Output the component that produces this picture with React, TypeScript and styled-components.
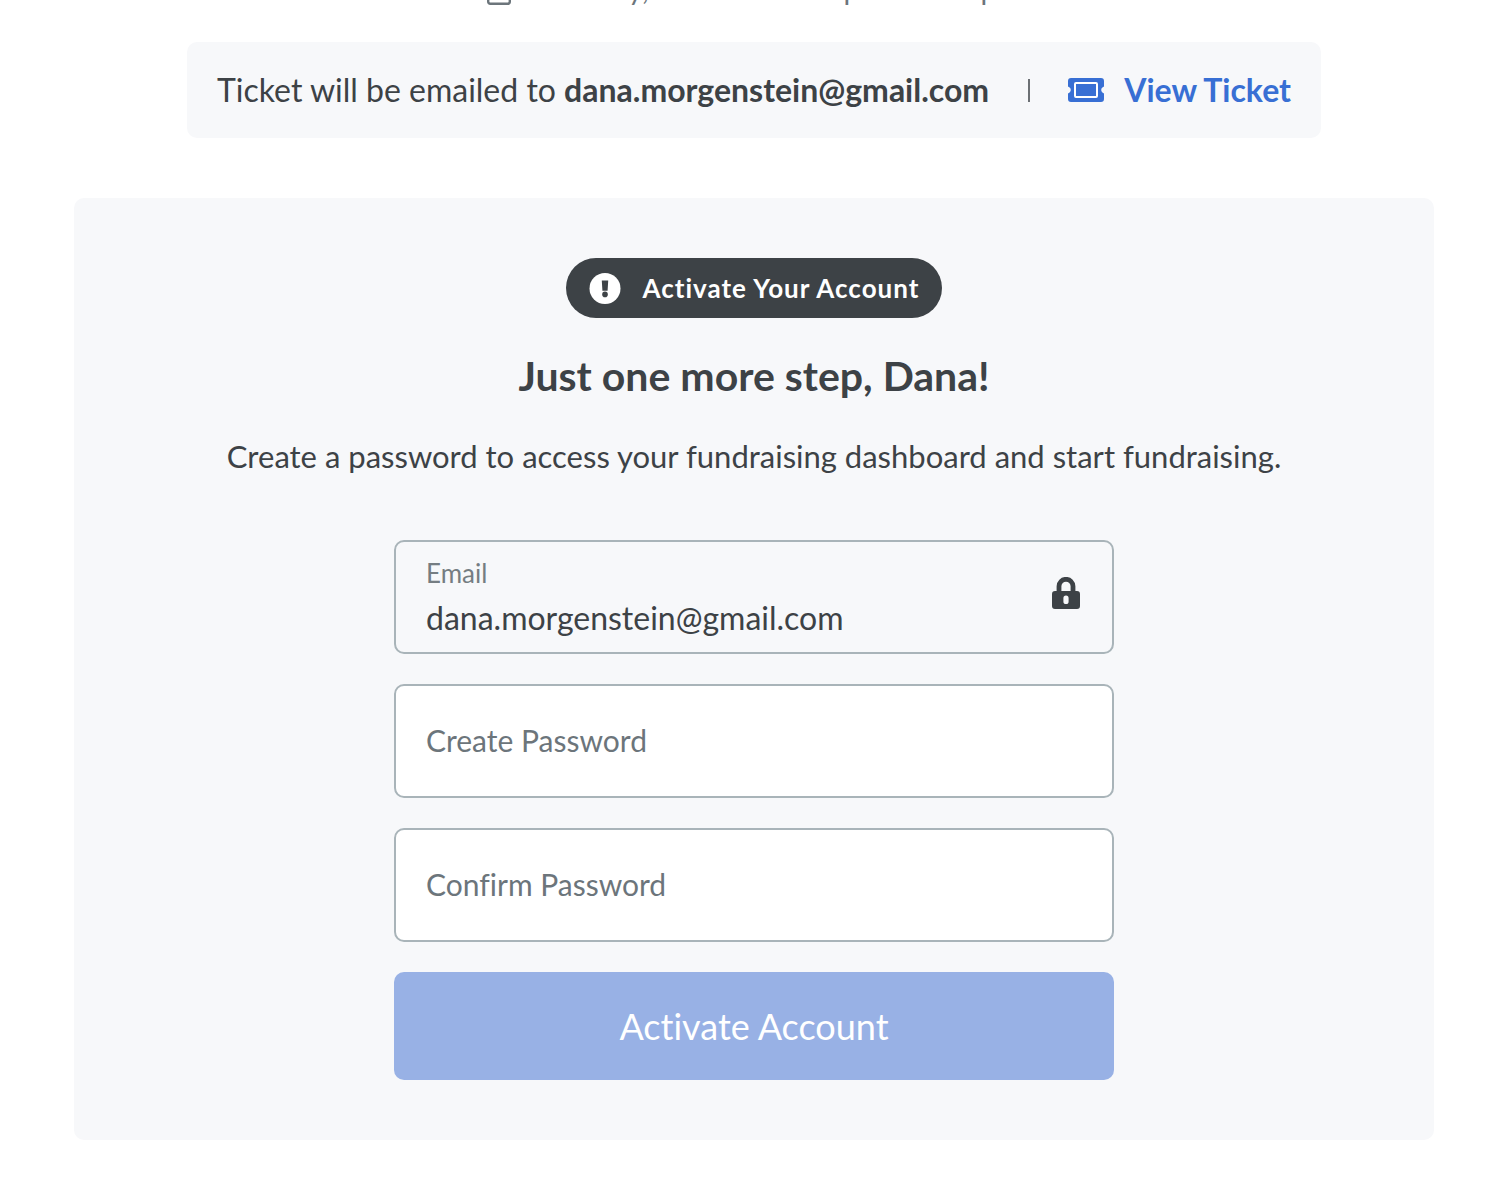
import React from "react";
import styled, { createGlobalStyle } from "styled-components";

const GlobalStyle = createGlobalStyle`
  *, *::before, *::after { box-sizing: border-box; }
  body {
    margin: 0;
    background: #ffffff;
    color: #3d4246;
    font-family: Lato, "Liberation Sans", sans-serif;
    font-variant-ligatures: none;
  }
  input, button { font-family: inherit; font-variant-ligatures: inherit; }
`;

const Page = styled.main`
  display: flex;
  flex-direction: column;
  align-items: center;
  padding: 0 74px 50px;
  overflow: hidden;
`;

const EventDate = styled.div`
  display: flex;
  align-items: center;
  gap: 20px;
  margin-top: -31px;
  margin-bottom: 33px;
  font-size: 29px;
  line-height: 40px;
  color: #6c757b;
  white-space: nowrap;
`;

const TicketBar = styled.section`
  display: flex;
  align-items: center;
  justify-content: space-between;
  flex-wrap: wrap;
  gap: 30px;
  width: 100%;
  max-width: 1134px;
  padding: 28px 30px;
  border-radius: 10px;
  background: #f7f8fa;
  font-size: 32px;
  line-height: 40px;
`;

const TicketText = styled.p`
  margin: 0;
`;

const Divider = styled.span`
  width: 2px;
  height: 23px;
  background: #6c7074;
`;

const TicketLink = styled.a`
  display: flex;
  align-items: center;
  gap: 20px;
  color: #386fd4;
  font-weight: 700;
  text-decoration: none;
`;

const Card = styled.section`
  display: flex;
  flex-direction: column;
  align-items: center;
  width: 100%;
  margin-top: 60px;
  padding: 60px 30px;
  border-radius: 10px;
  background: #f7f8fa;
  text-align: center;
`;

const Badge = styled.div`
  display: flex;
  align-items: center;
  gap: 22px;
  height: 60px;
  padding: 0 23px;
  border-radius: 30px;
  background: #3d4246;
  color: #ffffff;
  font-size: 26px;
  font-weight: 700;
  letter-spacing: 1px;
`;

const Title = styled.h1`
  margin: 34px 0 0;
  font-size: 41px;
  font-weight: 700;
  line-height: 48px;
`;

const Intro = styled.p`
  margin: 36px 0 0;
  font-size: 31px;
  line-height: 40px;
`;

const Form = styled.form`
  display: flex;
  flex-direction: column;
  gap: 30px;
  width: 100%;
  max-width: 720px;
  margin-top: 64px;
`;

const LockedField = styled.div`
  display: flex;
  align-items: center;
  height: 114px;
  padding: 0 32px 0 30px;
  border: 2px solid #a9b4b9;
  border-radius: 10px;
`;

const LockedBody = styled.div`
  display: flex;
  flex: 1;
  flex-direction: column;
  min-width: 0;
  gap: 8px;
  text-align: left;
`;

const FieldLabel = styled.label`
  color: #757d82;
  font-size: 26px;
  line-height: 32px;
`;

const LockedInput = styled.input`
  width: 100%;
  height: 40px;
  padding: 0;
  border: 0;
  outline: 0;
  background: transparent;
  color: #3d4246;
  font-size: 32px;
`;

const PasswordInput = styled.input`
  width: 100%;
  height: 114px;
  padding: 0 30px 2px;
  border: 2px solid #a9b4b9;
  border-radius: 10px;
  background: #ffffff;
  color: #3d4246;
  font-size: 30px;
  &::placeholder { color: #6c757b; opacity: 1; }
`;

const SubmitButton = styled.button`
  height: 108px;
  border: 0;
  border-radius: 10px;
  background: #98b1e5;
  color: #ffffff;
  font-size: 36px;
`;

const LockSvg = styled.svg`
  flex: none;
  margin-bottom: 8px;
`;

const CalendarIcon = () => (
  <svg width="24" height="32" viewBox="0 0 24 32" fill="none" stroke="#6c757b" strokeWidth="2.4" aria-hidden="true">
    <rect x="1.2" y="5.2" width="21.6" height="25.6" rx="2" />
    <path d="M1.2 13h21.6M7 0v8M17 0v8" />
  </svg>
);

const TicketIcon = () => (
  <svg width="36" height="24" viewBox="0 0 36 24" fill="#386fd4" aria-hidden="true">
    <path d="M3 0h30a3 3 0 0 1 3 3v5.4l-1.6 1.2a3 3 0 0 0 0 4.8l1.6 1.2V21a3 3 0 0 1-3 3H3a3 3 0 0 1-3-3v-5.4l1.6-1.2a3 3 0 0 0 0-4.8L0 8.400V3a3 3 0 0 1 3-3z" />
    <rect x="7" y="5" width="22" height="14" rx="1" fill="none" stroke="#ffffff" strokeWidth="2" />
  </svg>
);

const AlertIcon = () => (
  <svg width="32" height="32" viewBox="0 0 32 32" aria-hidden="true">
    <circle cx="16" cy="16.500" r="15.500" fill="#ffffff" />
    <path d="M12.800 8.400h6.400l-.6 10.400h-5.200z" fill="#3d4246" />
    <circle cx="16" cy="22.400" r="2.800" fill="#3d4246" />
  </svg>
);

const LockIcon = () => (
  <LockSvg width="28" height="32" viewBox="0 0 28 32" aria-hidden="true">
    <path d="M7 16V9.3a7 7 0 0 1 14 0V16" fill="none" stroke="#3d4246" strokeWidth="4.8" />
    <path
      fill="#3d4246"
      fillRule="evenodd"
      d="M3 14h22a3 3 0 0 1 3 3v12a3 3 0 0 1-3 3H3a3 3 0 0 1-3-3V17a3 3 0 0 1 3-3zm11 4.6a2.6 2.6 0 0 0-2.6 2.6v3.2a2.6 2.6 0 0 0 5.2 0v-3.2a2.6 2.6 0 0 0-2.6-2.6z"
    />
  </LockSvg>
);

export default function App() {
  return (
    <>
      <GlobalStyle />
      <Page>
        <EventDate>
          <CalendarIcon />
          <span>Saturday, June 7 at 5:00 pm – 9:00 pm</span>
        </EventDate>
        <TicketBar>
          <TicketText>
            Ticket will be emailed to <strong>dana.morgenstein@gmail.com</strong>
          </TicketText>
          <Divider />
          <TicketLink href="#ticket">
            <TicketIcon />
            View Ticket
          </TicketLink>
        </TicketBar>
        <Card>
          <Badge>
            <AlertIcon />
            Activate Your Account
          </Badge>
          <Title>Just one more step, Dana!</Title>
          <Intro>Create a password to access your fundraising dashboard and start fundraising.</Intro>
          <Form onSubmit={(event) => event.preventDefault()}>
            <LockedField>
              <LockedBody>
                <FieldLabel htmlFor="email">Email</FieldLabel>
                <LockedInput id="email" type="email" value="dana.morgenstein@gmail.com" readOnly />
              </LockedBody>
              <LockIcon />
            </LockedField>
            <PasswordInput type="password" aria-label="Create Password" placeholder="Create Password" />
            <PasswordInput type="password" aria-label="Confirm Password" placeholder="Confirm Password" />
            <SubmitButton type="submit">Activate Account</SubmitButton>
          </Form>
        </Card>
      </Page>
    </>
  );
}
